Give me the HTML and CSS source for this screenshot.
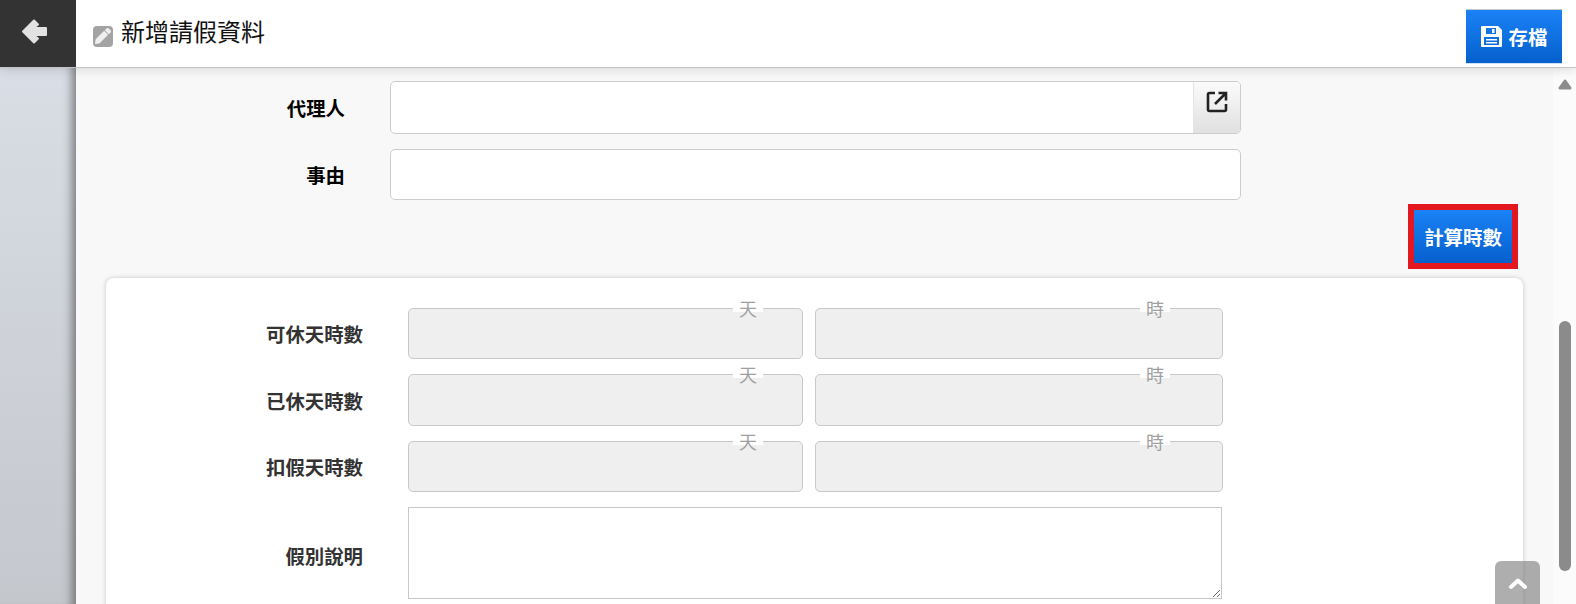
FILE: index.html
```html
<!DOCTYPE html>
<html lang="zh-Hant">
<head>
<meta charset="utf-8">
<title>新增請假資料</title>
<link rel="stylesheet" href="styles.css">
</head>
<body>
<div class="app">
  <header class="topbar">
    <a class="back" href="#" aria-label="返回">
      <svg width="27" height="27" viewBox="0 0 27 27"><path fill="#e2e2e2" stroke="#e2e2e2" stroke-width="2" stroke-linejoin="round" d="M2 13.500 13 2.500 17 6.500 12.500 10H25v7H12.500L17 20.500 13 24.500Z"/></svg>
    </a>
    <div class="title">
      <span class="title-icon">
        <svg width="16" height="16" viewBox="0 0 512 512"><path fill="#efefef" d="M497.900 142.100l-46.100 46.100c-4.700 4.700-12.300 4.700-17 0l-111-111c-4.700-4.700-4.700-12.300 0-17l46.100-46.100c18.700-18.700 49.100-18.700 67.900 0l60.100 60.100c18.800 18.700 18.800 49.100 0 67.900zM284.200 99.800L21.600 362.400.4 483.900c-2.900 16.400 11.400 30.600 27.800 27.800l121.500-21.300 262.600-262.600c4.700-4.700 4.700-12.300 0-17l-111-111c-4.800-4.700-12.400-4.700-17.100 0z"/></svg>
      </span>
      <h1>新增請假資料</h1>
    </div>
    <button class="btn save">
      <svg width="21" height="21" viewBox="0 0 21 21"><path fill="#fff" fill-rule="evenodd" d="M1 0h16l4 4v16a1 1 0 0 1-1 1H1a1 1 0 0 1-1-1V1a1 1 0 0 1 1-1ZM5 2v6h10V2ZM11 3h2.500v4H11ZM3 11v8h15v-8Z"/><path fill="#fff" d="M5 13h11v1.500H5ZM5 16h11v1.500H5Z"/></svg>
      存檔
    </button>
  </header>
  <div class="body">
    <aside class="rail"></aside>
    <main class="content">
      <div class="form">
        <div class="row">
          <label class="lbl">代理人</label>
          <div class="field picker">
            <span class="picker-btn">
              <svg width="22" height="22" viewBox="0 0 22 22"><path d="M9 2H3.500A1.500 1.500 0 0 0 2 3.500v15A1.500 1.500 0 0 0 3.500 20h15a1.500 1.500 0 0 0 1.500-1.500V13" fill="none" stroke="#222" stroke-width="2.600"/><path d="M9 13 19 3M12.500 2H20v7.500" fill="none" stroke="#222" stroke-width="2.600"/></svg>
            </span>
          </div>
        </div>
        <div class="row reason">
          <label class="lbl">事由</label>
          <div class="field"></div>
        </div>
        <div class="actions">
          <button class="btn calc">計算時數</button>
        </div>
      </div>
      <section class="card">
        <div class="crow">
          <label class="clbl">可休天時數</label>
          <div class="unit day"><span>天</span></div>
          <div class="unit hour"><span>時</span></div>
        </div>
        <div class="crow tall">
          <label class="clbl">已休天時數</label>
          <div class="unit day"><span>天</span></div>
          <div class="unit hour"><span>時</span></div>
        </div>
        <div class="crow">
          <label class="clbl">扣假天時數</label>
          <div class="unit day"><span>天</span></div>
          <div class="unit hour"><span>時</span></div>
        </div>
        <div class="crow note">
          <label class="clbl">假別說明</label>
          <textarea class="memo"></textarea>
        </div>
      </section>
    </main>
    <div class="scrollbar">
      <svg class="sb-up" width="14" height="11" viewBox="0 0 14 11"><path d="M7 2 2 9h10Z" fill="#8c8c8c" stroke="#8c8c8c" stroke-width="3" stroke-linejoin="round"/></svg>
      <span class="sb-thumb"></span>
    </div>
  </div>
  <a class="totop" href="#" aria-label="回到頂端">
    <svg width="20" height="14" viewBox="0 0 20 14"><path d="M3 11 10 4.500 17 11" fill="none" stroke="#fff" stroke-width="4" stroke-linecap="round" stroke-linejoin="round"/></svg>
  </a>
</div>
</body>
</html>
```

FILE: styles.css
```css
* { box-sizing: border-box; }
html, body { margin: 0; height: 604px; overflow: hidden; }
body {
  font-family: "Liberation Sans", "Noto Sans CJK TC", sans-serif;
  color: #000;
  background: #f8f8f8;
}
.app { position: relative; height: 604px; display: flex; flex-direction: column; overflow: hidden; }

.topbar {
  position: relative;
  z-index: 2;
  height: 68px;
  flex: none;
  display: flex;
  align-items: stretch;
  background: #fff;
  border-bottom: 1px solid #c4c4c4;
  box-shadow: 0 2px 10px rgba(0,0,0,.12);
}
.back {
  width: 76px;
  flex: none;
  display: flex;
  align-items: center;
  justify-content: center;
  padding-right: 7px;
  padding-bottom: 5px;
  background: #333;
}
.title { display: flex; align-items: center; gap: 8px; margin-left: 17px; padding-bottom: 2px; flex: 1; }
.title-icon {
  width: 20px; height: 21px; margin-top: 7px;
  display: flex; align-items: center; justify-content: center;
  background: #a3a3a3; border-radius: 4px;
}
.title h1 { margin: 0; font-size: 24px; font-weight: 400; line-height: 32px; color: #111; }

.btn {
  border: 0;
  color: #fff;
  font-family: inherit;
  font-weight: 700;
  background: linear-gradient(#1a82f7, #0560cc);
  padding: 0;
}
.save {
  width: 96px; height: 55px;
  margin: 9px 14px 0 0;
  border-top: 1px solid #c8c8c8;
  border-bottom: 1px solid #cfe0f5;
  display: flex; align-items: center; justify-content: center; gap: 7px;
  font-size: 19.4px;
}

.body { flex: 1; display: flex; min-height: 0; }
.rail {
  width: 76px; flex: none;
  background: linear-gradient(#d9dde5, #c4c7cc);
  box-shadow: inset -12px 0 10px -8px rgba(50,50,50,.55);
}
.content { flex: 1; min-width: 0; background: #f8f8f8; }
.scrollbar { width: 23px; flex: none; position: relative; background: #fbfbfb; }
.sb-up { position: absolute; left: 5px; top: 11px; }
.sb-thumb {
  position: absolute; left: 6px; top: 253px;
  width: 12px; height: 250px;
  background: #8b8b8b; border-radius: 6px;
}

.form { padding-top: 13px; }
.row { display: flex; align-items: center; }
.reason { margin-top: 15px; }
.lbl { width: 269px; text-align: right; font-size: 19.4px; font-weight: 700; margin-right: 45px; }
.field {
  width: 851px; height: 51px;
  background: #fff;
  border: 1px solid #ccc;
  border-radius: 5px;
}
.picker { height: 53px; display: flex; justify-content: flex-end; overflow: hidden; }
.picker-btn {
  width: 47px;
  display: flex; justify-content: center; align-items: flex-start;
  padding-top: 9px;
  background: linear-gradient(#fbfbfb, #e0e0e0);
  border-left: 1px solid #e4e4e4;
}
.actions { display: flex; justify-content: flex-end; margin-top: 4px; padding-right: 35px; }
.calc {
  width: 110px; height: 65px;
  border: 6px solid #e3171f;
  background-origin: padding-box;
  background-clip: padding-box;
  font-size: 19.4px;
}

.card {
  margin: 9px 30px 0;
  padding-top: 30px;
  height: 400px;
  background: #fff;
  border-radius: 8px 8px 0 0;
  box-shadow: 0 0 5px rgba(0,0,0,.2);
}
.crow { display: flex; align-items: center; margin-bottom: 15px; }
.clbl { width: 257px; text-align: right; font-size: 19.4px; font-weight: 700; color: #333; margin-right: 45px; }
.note .clbl { padding-top: 4px; }
.unit {
  position: relative;
  height: 51px;
  background: #efefef;
  border: 1px solid #c8c8c8;
  border-radius: 5px;
}
.tall .unit { height: 52px; }
.day { width: 395px; margin-right: 12px; }
.hour { width: 408px; }
.unit span {
  position: absolute;
  top: -9px;
  right: 39px;
  padding: 0 6px;
  font-size: 18px;
  line-height: 20px;
  color: #a0a0a0;
  background: linear-gradient(#fff 60%, transparent 60%);
}
.hour span { right: 52px; }
.memo {
  display: block;
  width: 814px; height: 92px;
  margin: 0;
  padding: 4px;
  background: #fff;
  border: 1px solid #c8c8c8;
  border-radius: 0;
}
.totop {
  position: absolute;
  z-index: 3;
  left: 1495px; top: 561px;
  width: 45px; height: 50px;
  padding-top: 15px;
  display: flex; justify-content: center; align-items: flex-start;
  background: rgba(120,120,120,.6);
  border-radius: 6px;
}
```
